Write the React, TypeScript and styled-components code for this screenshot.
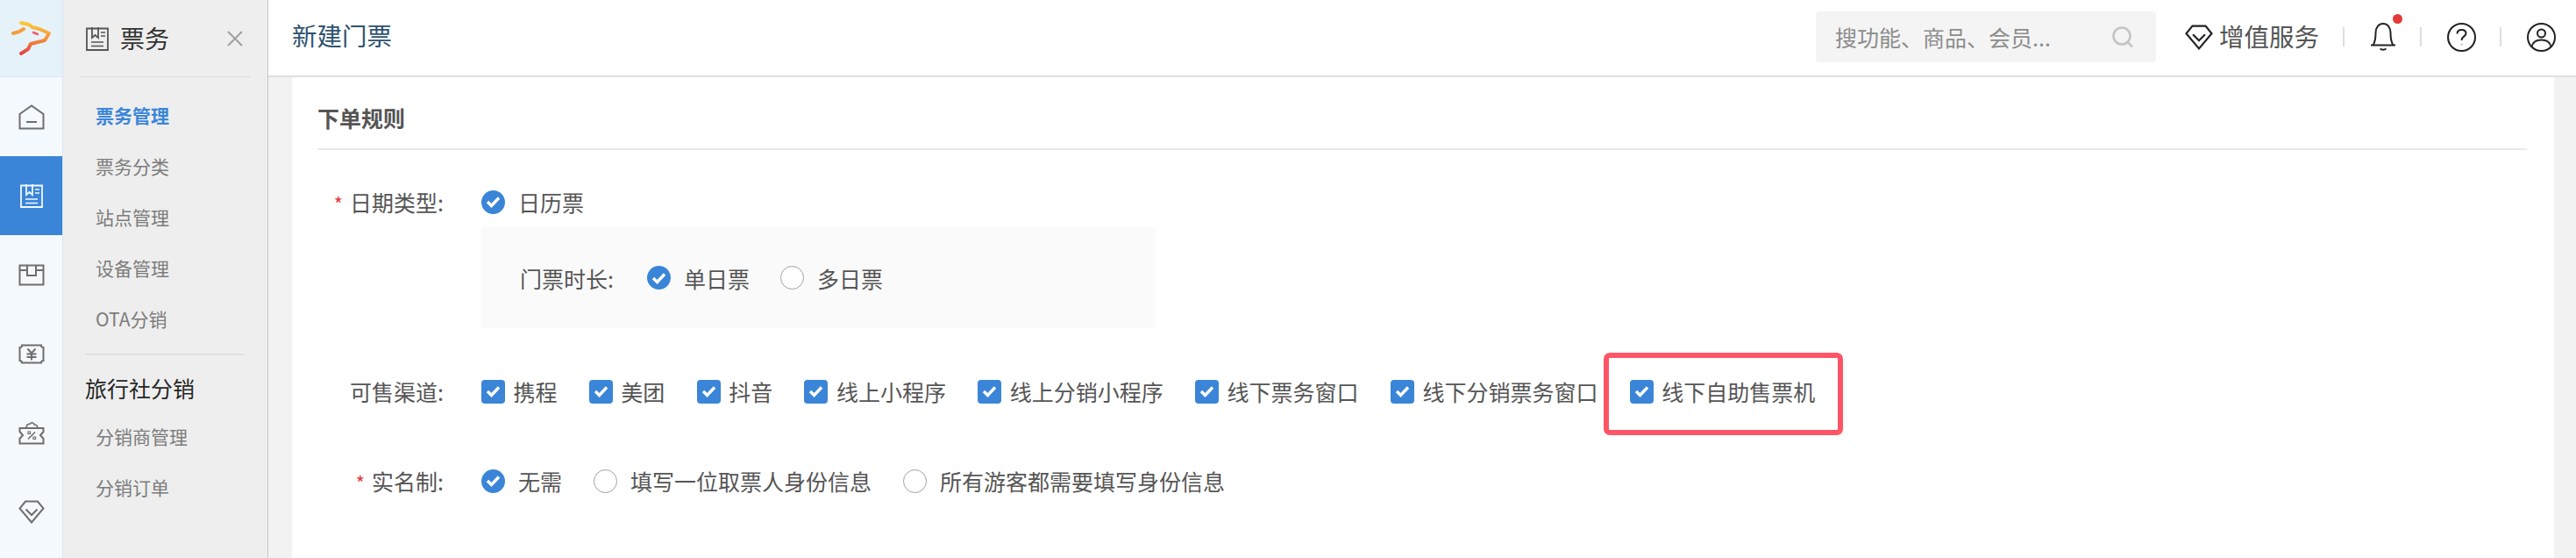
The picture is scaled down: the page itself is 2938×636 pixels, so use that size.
import styled, { createGlobalStyle } from 'styled-components';

const GlobalStyle = createGlobalStyle`
    html, body {
        margin: 0;
        padding: 0;
        background: #f2f2f2;
    }
    body {
        font-family: "Noto Sans CJK SC", "Noto Sans", sans-serif;
    }
`;

const HomeIcon = () => (
    <svg width="30" height="29" viewBox="0 0 30 29" fill="none" stroke="currentColor" strokeWidth="2">
        <path d="M1.5 11 15 1.5 28.5 11V27.5H1.5Z" />
        <path d="M9 20H21" />
    </svg>
);

const TicketIcon = ({ size = 26 }: { size?: number }) => (
    <svg width={size} height={size + 2} viewBox="0 0 26 28" fill="none" stroke="currentColor" strokeWidth="1.8">
        <path d="M1 2.5H25V27H1Z" />
        <path d="M7 1V13L10.5 10 14 13V1" />
        <path d="M17 7H22M17 11H22M6 18H20M6 22.5H20" strokeWidth="1.5" />
    </svg>
);

const BoxIcon = () => (
    <svg width="30" height="25" viewBox="0 0 30 25" fill="none" stroke="currentColor" strokeWidth="2">
        <path d="M1.5 1.5H28.5V23.5H1.5Z" />
        <path d="M1.5 7H10V13H20V7H28.5M10 1.5V7M20 1.5V7" />
    </svg>
);

const MoneyIcon = () => (
    <svg width="30" height="23" viewBox="0 0 30 23" fill="none" stroke="currentColor" strokeWidth="2">
        <path d="M4 1.5H26Q26 4 28.5 4V19Q26 19 26 21.5H4Q4 19 1.5 19V4Q4 4 4 1.5Z" />
        <path d="M10.5 5.5 15 10.5 19.5 5.5M9.5 11.5H20.5M9.5 15H20.5M15 10.5V18.5" strokeWidth="2" />
    </svg>
);

const CouponIcon = () => (
    <svg width="30" height="27" viewBox="0 0 30 27" fill="none" stroke="currentColor" strokeWidth="2">
        <path d="M1.5 8H28.5V12L25 16 28.5 20V25.5H1.5V20L5 16 1.5 12Z" />
        <path d="M9 7.5C9 2 13 4 14 2.5 15 1 18 2 18 4 21 4 22 6 21.5 7.5" strokeWidth="1.6" />
        <path d="M11 20.5 19 12.5" strokeWidth="1.6" />
        <path d="M11 12H13.5V14.5H11ZM17 18H19.5V20.5H17Z" strokeWidth="1.2" />
    </svg>
);

const DiamondIcon = ({ width = 30, height = 27 }: { width?: number; height?: number }) => (
    <svg width={width} height={height} viewBox="0 0 30 27" fill="none" stroke="currentColor" strokeWidth="2">
        <path d="M8 1.5H22L28.5 9.5 15 25.5 1.5 9.5Z" />
        <path d="M8.5 10.5 15 17 21.5 10.5" />
    </svg>
);

const Logo = () => (
    <svg width="46" height="42" viewBox="0 0 46 42" fill="none" strokeWidth="4" strokeLinejoin="round" strokeLinecap="round">
        <defs>
            <linearGradient id="fox" x1="0" y1="0" x2="0" y2="1">
                <stop offset="0" stopColor="#fbc93a" />
                <stop offset="0.5" stopColor="#f4953a" />
                <stop offset="1" stopColor="#e8404a" />
            </linearGradient>
        </defs>
        <path d="M2 15 9 13 14 10" stroke="#f3a03c" />
        <path d="M11 3 20 5 24 8 32 10 43 15 38 23 30 25 22 27 19 33 11 38" stroke="url(#fox)" />
        <path d="M25 14 30 16" stroke="#ee5a6a" strokeWidth="2.5" />
    </svg>
);

const CheckMark = () => (
    <svg width="17" height="14" viewBox="0 0 17 14" fill="none" stroke="#fff" strokeWidth="3.4">
        <path d="M2 7 6.5 11.5 15 2.5" />
    </svg>
);

const channels = ['携程', '美团', '抖音', '线上小程序', '线上分销小程序', '线下票务窗口', '线下分销票务窗口'];
const sideItems = ['票务管理', '票务分类', '站点管理', '设备管理', 'OTA分销'];

const App = () => {
    return (
        <Page>
            <GlobalStyle />
            <Rail>
                <LogoCell>
                    <Logo />
                </LogoCell>
                <RailItem><HomeIcon /></RailItem>
                <RailItem $active><TicketIcon /></RailItem>
                <RailItem><BoxIcon /></RailItem>
                <RailItem><MoneyIcon /></RailItem>
                <RailItem><CouponIcon /></RailItem>
                <RailItem><DiamondIcon /></RailItem>
            </Rail>
            <SubNav>
                <SubHeader>
                    <SubTitleIcon><TicketIcon /></SubTitleIcon>
                    <SubTitle>票务</SubTitle>
                    <CloseButton>
                        <svg width="18" height="18" viewBox="0 0 18 18" stroke="currentColor" strokeWidth="2">
                            <path d="M1 1 17 17M17 1 1 17" />
                        </svg>
                    </CloseButton>
                </SubHeader>
                <SubMenu>
                    {sideItems.map((item, i) => (
                        <SubItem key={item} $active={i === 0}>{item}</SubItem>
                    ))}
                </SubMenu>
                <SubDivider />
                <GroupTitle>旅行社分销</GroupTitle>
                <SubItem>分销商管理</SubItem>
                <SubItem>分销订单</SubItem>
            </SubNav>
            <Main>
                <TopBar>
                    <PageTitle>新建门票</PageTitle>
                    <SearchBox>
                        <SearchText>搜功能、商品、会员...</SearchText>
                        <svg width="25" height="24" viewBox="0 0 25 24" fill="none" stroke="#c4c4c4" strokeWidth="2.6">
                            <circle cx="11" cy="11" r="9.5" />
                            <path d="M17.5 18 23 23.5" />
                        </svg>
                    </SearchBox>
                    <ServiceLink>
                        <DiamondIcon width={36} height={29} />
                        <span>增值服务</span>
                    </ServiceLink>
                    <Sep />
                    <BellWrap>
                        <svg width="30" height="32" viewBox="0 0 30 32" fill="none" stroke="#222" strokeWidth="2">
                            <path d="M1 25.5H29" />
                            <path d="M3.5 25.5C6.5 21 6.5 17 6.5 11.5 6.5 5 10 1 15 1 20 1 23.5 5 23.5 11.5 23.5 17 23.5 21 26.5 25.5" />
                            <path d="M11.5 29.5Q15 32 18.5 29.5" />
                        </svg>
                        <RedDot />
                    </BellWrap>
                    <Sep />
                    <TopIcon>
                        <svg width="33" height="33" viewBox="0 0 33 33" fill="none" stroke="#222" strokeWidth="2">
                            <circle cx="16.5" cy="16.5" r="15.5" />
                            <path d="M11.5 12.5C11.5 9.5 13.5 8 16.5 8 19.5 8 21.5 9.8 21.5 12.3 21.5 15.5 16.5 15.5 16.5 20" />
                            <path d="M16.5 24V25.5" stroke="#aaa" />
                        </svg>
                    </TopIcon>
                    <Sep />
                    <TopIcon>
                        <svg width="33" height="33" viewBox="0 0 33 33" fill="none" stroke="#222" strokeWidth="2">
                            <circle cx="16.5" cy="16.5" r="15.5" />
                            <circle cx="16.5" cy="12" r="4.5" />
                            <path d="M5.5 27.5C6.5 22 11 19.5 16.5 19.5 22 19.5 26.5 22 27.5 27.5" />
                        </svg>
                    </TopIcon>
                </TopBar>
                <Content>
                    <Card>
                        <SectionTitle>下单规则</SectionTitle>
                        <FormRow $top={41}>
                            <Label><Star>*</Star>日期类型:</Label>
                            <Option>
                                <Radio $checked><CheckMark /></Radio>
                                日历票
                            </Option>
                        </FormRow>
                        <SubPanel>
                            <PanelLabel>门票时长:</PanelLabel>
                            <Options $gap={35}>
                                <Option>
                                    <Radio $checked><CheckMark /></Radio>
                                    单日票
                                </Option>
                                <Option>
                                    <Radio />
                                    多日票
                                </Option>
                            </Options>
                        </SubPanel>
                        <FormRow $top={54}>
                            <Label>可售渠道:</Label>
                            <Options $gap={36.3}>
                                {channels.map(c => (
                                    <Channel key={c}>
                                        <CheckBox><CheckMark /></CheckBox>
                                        {c}
                                    </Channel>
                                ))}
                                <Channel>
                                    <CheckBox><CheckMark /></CheckBox>
                                    线下自助售票机
                                    <Highlight />
                                </Channel>
                            </Options>
                        </FormRow>
                        <FormRow $top={66}>
                            <Label><Star>*</Star>实名制:</Label>
                            <Options $gap={36}>
                                <Option>
                                    <Radio $checked><CheckMark /></Radio>
                                    无需
                                </Option>
                                <Option>
                                    <Radio />
                                    填写一位取票人身份信息
                                </Option>
                                <Option>
                                    <Radio />
                                    所有游客都需要填写身份信息
                                </Option>
                            </Options>
                        </FormRow>
                    </Card>
                </Content>
            </Main>
        </Page>
    );
};

export default App;

const Page = styled.div`
    display: flex;
    width: 2938px;
    height: 636px;
    overflow: hidden;
`;
const Rail = styled.div`
    width: 72px;
    flex: none;
    background: #f4f9fe;
    border-right: 1px solid #d9e6f1;
    box-sizing: border-box;
`;
const LogoCell = styled.div`
    height: 88px;
    box-sizing: border-box;
    display: flex;
    align-items: center;
    justify-content: center;
    background: #e6f2fa;
    border-bottom: 1px solid #d9e8f3;
`;
const RailItem = styled.div<{ $active?: boolean }>`
    height: 90px;
    display: flex;
    align-items: center;
    justify-content: center;
    color: ${({ $active }) => ($active ? '#f2f7fd' : '#6e6e6e')};
    background: ${({ $active }) => ($active ? '#3a85d8' : 'transparent')};
`;
const SubNav = styled.div`
    width: 234px;
    flex: none;
    box-sizing: border-box;
    background: #eeeeee;
    border-right: 1px solid #c6c6c6;
`;
const SubHeader = styled.div`
    height: 88px;
    box-sizing: border-box;
    margin: 0 19px 0 18px;
    padding: 0 9px 0 8px;
    display: flex;
    align-items: center;
    border-bottom: 1px solid #dcdcdc;
`;
const SubTitleIcon = styled.div`
    display: flex;
    color: #555;
    margin-right: 13px;
`;
const SubTitle = styled.div`
    flex: 1;
    font-size: 28px;
    color: #333;
    line-height: 36px;
    margin-bottom: 2px;
`;
const CloseButton = styled.div`
    display: flex;
    color: #a0a0a0;
`;
const SubMenu = styled.div`
    padding-top: 14px;
`;
const SubItem = styled.div<{ $active?: boolean }>`
    height: 58px;
    line-height: 58px;
    padding-left: 37px;
    font-size: 21px;
    font-weight: ${({ $active }) => ($active ? 700 : 400)};
    color: ${({ $active }) => ($active ? '#3a86d9' : '#7c7c7c')};
`;
const SubDivider = styled.div`
    height: 2px;
    margin: 11px 26px 14px 25px;
    background: #e0e0e0;
`;
const GroupTitle = styled.div`
    height: 46px;
    line-height: 46px;
    padding-left: 25px;
    margin-bottom: 3px;
    font-size: 25px;
    color: #262626;
`;
const Main = styled.div`
    flex: 1;
    min-width: 0;
    display: flex;
    flex-direction: column;
`;
const TopBar = styled.div`
    height: 88px;
    flex: none;
    box-sizing: border-box;
    background: #fff;
    border-bottom: 2px solid #e0e0e0;
    padding: 0 23px 2px 27px;
    display: flex;
    align-items: center;
`;
const PageTitle = styled.div`
    font-size: 28.5px;
    color: #2f526e;
    line-height: 40px;
    margin-bottom: 4px;
`;
const SearchBox = styled.div`
    margin-left: auto;
    width: 388px;
    height: 58px;
    box-sizing: border-box;
    padding: 0 25px 0 22px;
    border-radius: 4px;
    background: #f4f4f4;
    display: flex;
    align-items: center;
    justify-content: space-between;
`;
const SearchText = styled.span`
    font-size: 25px;
    color: #8c8c8c;
`;
const ServiceLink = styled.div`
    margin-left: 31px;
    display: flex;
    align-items: center;
    gap: 5px;
    font-size: 28.5px;
    line-height: 40px;
    color: #555;
    svg {
        color: #222;
    }
    span {
        margin-bottom: 2px;
    }
`;
const Sep = styled.div`
    width: 2px;
    height: 22px;
    margin: 0 29px 0 27px;
    background: #dedede;
`;
const BellWrap = styled.div`
    position: relative;
    display: flex;
`;
const RedDot = styled.span`
    position: absolute;
    top: -10px;
    right: -7px;
    width: 11px;
    height: 11px;
    border-radius: 50%;
    background: #e23a36;
`;
const TopIcon = styled.div`
    display: flex;
`;
const Content = styled.div`
    flex: 1;
    min-height: 0;
    padding: 0 25px 0 27px;
`;
const Card = styled.div`
    height: 100%;
    box-sizing: border-box;
    background: #fff;
    padding: 0 31px 0 29px;
`;
const SectionTitle = styled.div`
    height: 83px;
    box-sizing: border-box;
    line-height: 92px;
    font-size: 25px;
    font-weight: 700;
    color: #555;
    border-bottom: 2px solid #eaeaea;
`;
const FormRow = styled.div<{ $top: number }>`
    margin-top: ${({ $top }) => $top}px;
    height: 36px;
    display: flex;
    align-items: center;
    font-size: 25px;
    line-height: 36px;
    color: #555;
`;
const Label = styled.div`
    width: 144px;
    flex: none;
    margin-right: 43px;
    text-align: right;
`;
const Star = styled.span`
    color: #e5393a;
    font-size: 22px;
    margin-right: 8px;
`;
const Options = styled.div<{ $gap: number }>`
    display: flex;
    align-items: center;
    gap: ${({ $gap }) => $gap}px;
`;
const Option = styled.div`
    display: flex;
    align-items: center;
    gap: 15px;
`;
const Channel = styled.div`
    position: relative;
    display: flex;
    align-items: center;
    gap: 9.5px;
`;
const Radio = styled.span<{ $checked?: boolean }>`
    width: 27px;
    height: 27px;
    box-sizing: border-box;
    border-radius: 50%;
    display: flex;
    align-items: center;
    justify-content: center;
    background: ${({ $checked }) => ($checked ? '#3a85d8' : '#fff')};
    border: ${({ $checked }) => ($checked ? 'none' : '1px solid #a0a0a0')};
`;
const CheckBox = styled.span`
    width: 27px;
    height: 27px;
    border-radius: 4px;
    display: flex;
    align-items: center;
    justify-content: center;
    background: #3a85d8;
`;
const SubPanel = styled.div`
    margin: 11px 0 0 187px;
    width: 769px;
    height: 115px;
    box-sizing: border-box;
    padding-left: 44px;
    background: #fafafa;
    display: flex;
    align-items: center;
    font-size: 25px;
    color: #555;
`;
const PanelLabel = styled.div`
    margin-right: 38px;
`;
const Highlight = styled.div`
    position: absolute;
    left: -30px;
    top: -26px;
    width: 273px;
    height: 94px;
    box-sizing: border-box;
    border: 6px solid #ff5567;
    border-radius: 7px;
`;
